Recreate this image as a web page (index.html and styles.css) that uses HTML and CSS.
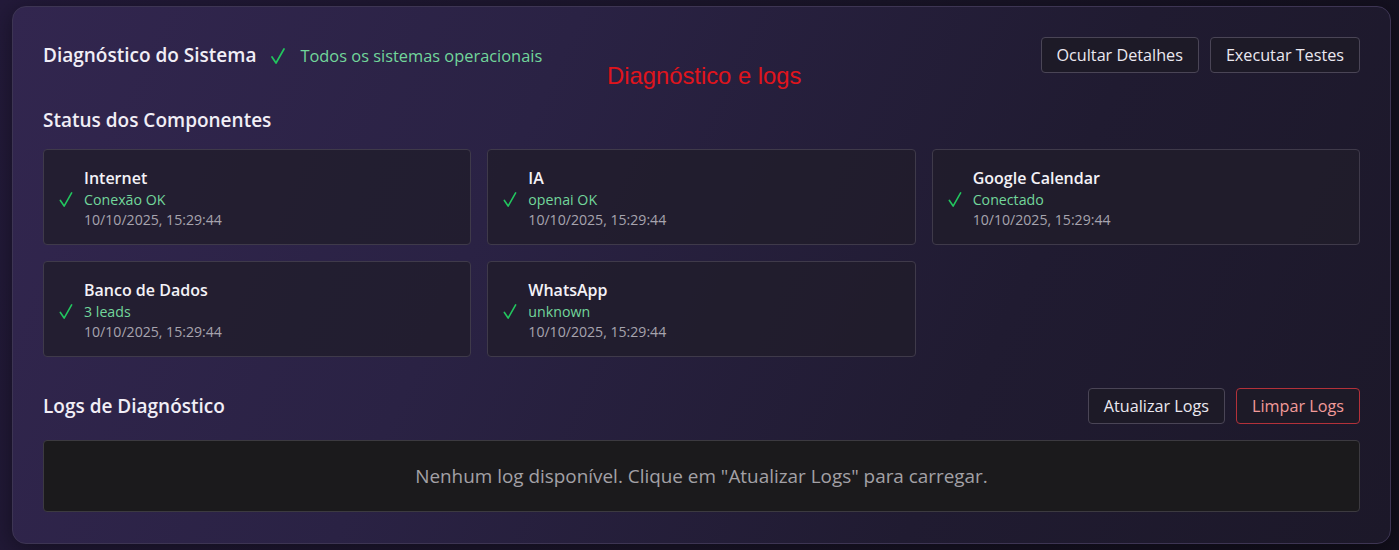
FILE: index.html
```html
<!DOCTYPE html>
<html lang="pt-BR">
<head>
  <meta charset="UTF-8">
  <title>Diagnóstico e logs</title>
  <link rel="stylesheet" href="styles.css">
</head>
<body>
  <div class="panel">
    <div class="panel-head">
      <div class="head-title">
        <h2>Diagnóstico do Sistema</h2>
        <svg class="check" viewBox="0 0 14 16"><polyline points="1,9 5,15 13,1"/></svg>
        <span class="ok-text">Todos os sistemas operacionais</span>
      </div>
      <div class="btn-row">
        <button class="btn">Ocultar Detalhes</button>
        <button class="btn">Executar Testes</button>
      </div>
    </div>

    <h3 class="section-title">Status dos Componentes</h3>
    <div class="comp-grid">
      <div class="comp-card">
        <svg class="check" viewBox="0 0 14 16"><polyline points="1,9 5,15 13,1"/></svg>
        <div class="comp-info">
          <div class="comp-name">Internet</div>
          <div class="comp-status">Conexão OK</div>
          <div class="comp-time">10/10/2025, 15:29:44</div>
        </div>
      </div>
      <div class="comp-card">
        <svg class="check" viewBox="0 0 14 16"><polyline points="1,9 5,15 13,1"/></svg>
        <div class="comp-info">
          <div class="comp-name">IA</div>
          <div class="comp-status">openai OK</div>
          <div class="comp-time">10/10/2025, 15:29:44</div>
        </div>
      </div>
      <div class="comp-card">
        <svg class="check" viewBox="0 0 14 16"><polyline points="1,9 5,15 13,1"/></svg>
        <div class="comp-info">
          <div class="comp-name">Google Calendar</div>
          <div class="comp-status">Conectado</div>
          <div class="comp-time">10/10/2025, 15:29:44</div>
        </div>
      </div>
      <div class="comp-card">
        <svg class="check" viewBox="0 0 14 16"><polyline points="1,9 5,15 13,1"/></svg>
        <div class="comp-info">
          <div class="comp-name">Banco de Dados</div>
          <div class="comp-status">3 leads</div>
          <div class="comp-time">10/10/2025, 15:29:44</div>
        </div>
      </div>
      <div class="comp-card">
        <svg class="check" viewBox="0 0 14 16"><polyline points="1,9 5,15 13,1"/></svg>
        <div class="comp-info">
          <div class="comp-name">WhatsApp</div>
          <div class="comp-status">unknown</div>
          <div class="comp-time">10/10/2025, 15:29:44</div>
        </div>
      </div>
    </div>

    <div class="logs-head">
      <h3 class="section-title">Logs de Diagnóstico</h3>
      <div class="btn-row">
        <button class="btn">Atualizar Logs</button>
        <button class="btn btn-danger">Limpar Logs</button>
      </div>
    </div>
    <div class="logs-box">
      Nenhum log disponível. Clique em "Atualizar Logs" para carregar.
    </div>
  </div>

  <div class="tag-label">Diagnóstico e logs</div>
</body>
</html>
```

FILE: styles.css
```css
body {
  margin: 0;
  min-height: 550px;
  background: linear-gradient(110deg, #231a3a 0%, #1a1529 55%, #120f1c 100%);
  font-family: 'Open Sans', 'Noto Sans', sans-serif;
  color: #eeeaf4;
  padding: 6px 8px 7px 12px;
  box-sizing: border-box;
}
.panel {
  border: 1px solid #3d3553;
  border-radius: 14px;
  background: linear-gradient(115deg, #32264f 0%, #2a2244 35%, #201b31 70%, #1c1829 100%);
  padding: 30px 30px 31px 30px;
  box-shadow: 0 4px 24px #0006;
}
.panel-head {
  display: flex;
  align-items: center;
  justify-content: space-between;
}
.head-title {
  display: flex;
  align-items: center;
}
h2, h3 {
  margin: 0;
  font-size: 19px;
  font-weight: 600;
  color: #f1eef6;
}
.check {
  fill: none;
  stroke: #22c55e;
  stroke-width: 1.7;
  stroke-linecap: round;
  stroke-linejoin: round;
}
.head-title .check {
  width: 14px;
  height: 16px;
  margin: 2px 15px 0 15px;
}
.ok-text {
  color: #72d69b;
  font-size: 16.4px;
}
.btn-row {
  display: flex;
  gap: 11px;
}
.btn {
  background: #1d1a27;
  color: #ebe8f0;
  border: 1px solid #4a4556;
  border-radius: 4px;
  height: 36px;
  padding: 0 15px;
  font-family: inherit;
  font-size: 16.2px;
  cursor: pointer;
}
.btn-danger {
  color: #f29a9a;
  border-color: #b3313a;
}
.section-title {
  margin: 35px 0 17px 0;
  line-height: 24px;
}
.comp-grid {
  display: grid;
  grid-template-columns: repeat(3, 1fr);
  gap: 16px;
}
.comp-card {
  display: flex;
  align-items: center;
  gap: 11px;
  height: 96px;
  box-sizing: border-box;
  padding: 4px 15px 0 15px;
  background: #211d2bcc;
  border: 1px solid #3f3a4a;
  border-radius: 4px;
}
.comp-card .check {
  width: 14px;
  height: 15px;
}
.comp-name {
  font-weight: 600;
  font-size: 16px;
  line-height: 21px;
  color: #f4f2f7;
}
.comp-status {
  color: #72d69b;
  font-size: 14.2px;
  line-height: 21px;
}
.comp-time {
  color: #a7a4ae;
  font-size: 14.1px;
  line-height: 20px;
}
.logs-head {
  display: flex;
  align-items: center;
  justify-content: space-between;
  margin: 31px 0 16px 0;
}
.logs-head .section-title {
  margin: 0;
}
.logs-box {
  height: 72px;
  box-sizing: border-box;
  display: flex;
  align-items: center;
  justify-content: center;
  background: #1b1a1c;
  border: 1px solid #3c3a40;
  border-radius: 4px;
  color: #a3a1a6;
  font-size: 18.9px;
}
.tag-label {
  position: absolute;
  left: 607px;
  top: 62px;
  color: #e0141c;
  font-family: 'Liberation Sans', Arial, sans-serif;
  font-size: 23.8px;
}
```
